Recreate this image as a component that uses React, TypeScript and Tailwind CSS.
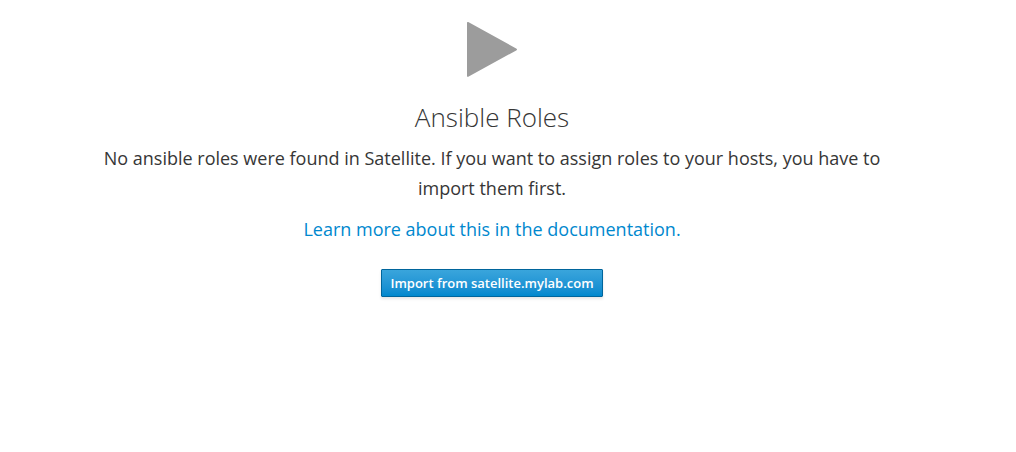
import React from "react";

const App = () => {
  return (
    <main className="min-h-screen bg-white pl-20 pr-28 pt-5 font-['Open_Sans',sans-serif] text-[#363636]">
      <section className="flex flex-col items-center text-center">
        <svg className="h-[58px] w-[52px] text-[#9c9c9c]" viewBox="0 0 52 58" fill="currentColor" aria-hidden="true">
          <path d="M1 3.2v52.4c0 1.2.6 1.6 1.7 1L50.2 30.4c1.1-.6 1.1-1.4 0-2L2.7 2.2C1.6 1.6 1 2 1 3.2z" />
        </svg>
        <h1 className="mt-6 text-[26px] font-light leading-[30px]">Ansible Roles</h1>
        <p className="mt-[11px] text-lg leading-[30px]">
          No ansible roles were found in Satellite. If you want to assign roles to your hosts, you have to import them first.
        </p>
        <p className="mt-[11px] text-lg leading-[30px]">
          <a href="#documentation" className="text-[#0088ce] hover:underline">
            Learn more about this in the documentation.
          </a>
        </p>
        <button
          type="button"
          className="mt-[25px] h-7 rounded-[1px] border border-[#00659c] bg-linear-to-b from-[#39a5dc] to-[#0088ce] px-2 text-[13px] font-semibold leading-5 text-white shadow-[0_2px_3px_rgba(3,3,3,0.1)]"
        >
          Import from satellite.mylab.com
        </button>
      </section>
    </main>
  );
};

export default App;
